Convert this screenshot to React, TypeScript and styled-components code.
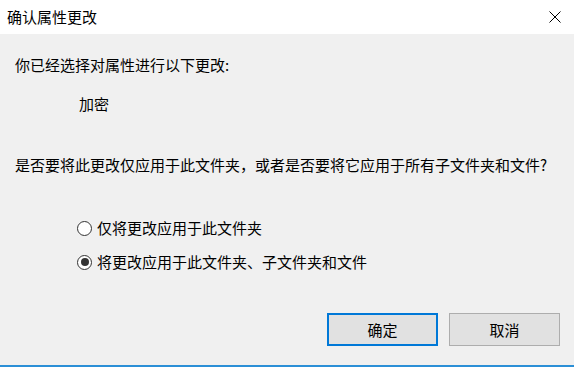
import React from "react";
import styled, { createGlobalStyle } from "styled-components";

const Global = createGlobalStyle`
  html, body { margin: 0; padding: 0; background: #f0f0f0; }
  body { font-family: "Noto Sans CJK SC", "Microsoft YaHei", sans-serif; }
  * { box-sizing: border-box; }
`;

const Window = styled.div`
  width: 574px;
  height: 367px;
  display: flex;
  flex-direction: column;
  background: #f0f0f0;
  color: #000;
  font-size: 15px;
  border-bottom: 2px solid #2b8fd6;
`;

const TitleBar = styled.div`
  height: 34px;
  flex: none;
  background: #fff;
  display: flex;
  align-items: center;
  justify-content: space-between;
  padding: 0 13px 0 7px;
`;

const Title = styled.span`
  line-height: 20px;
`;

const CloseIcon = styled.svg`
  width: 12px;
  height: 12px;
  display: block;
`;

const Body = styled.div`
  flex: 1;
  display: flex;
  flex-direction: column;
  padding: 0 14px 0 15px;
`;

const Line = styled.div<{ $top: number; $indent?: number }>`
  line-height: 20px;
  height: 20px;
  margin-top: ${(p) => p.$top}px;
  padding-left: ${(p) => p.$indent ?? 0}px;
  white-space: nowrap;
`;

const RadioGroup = styled.div`
  margin-top: 43px;
  padding-left: 62px;
  display: flex;
  flex-direction: column;
  gap: 14px;
`;

const RadioRow = styled.label`
  display: flex;
  align-items: center;
  gap: 5px;
  height: 20px;
  line-height: 20px;
`;

const RadioCircle = styled.span<{ $checked?: boolean }>`
  width: 15px;
  height: 15px;
  border-radius: 50%;
  border: 1px solid #333;
  background: #fff;
  display: flex;
  align-items: center;
  justify-content: center;
  flex: none;
  &::after {
    content: "";
    width: 8px;
    height: 8px;
    border-radius: 50%;
    background: ${(p) => (p.$checked ? "#333" : "transparent")};
  }
`;

const ButtonRow = styled.div`
  margin-top: 41px;
  display: flex;
  justify-content: flex-end;
  gap: 11px;
`;

const Button = styled.button<{ $primary?: boolean }>`
  width: 111px;
  height: 33px;
  background: #e1e1e1;
  border: ${(p) => (p.$primary ? "2px solid #0078d7" : "1px solid #adadad")};
  font-family: inherit;
  font-size: 15px;
  color: #000;
  padding: 0;
  margin: 0;
  display: flex;
  align-items: center;
  justify-content: center;
`;

export default function App() {
  return (
    <>
      <Global />
      <Window>
        <TitleBar>
          <Title>确认属性更改</Title>
          <CloseIcon viewBox="0 0 12 12">
            <path d="M0.5 0.5 L11.5 11.5 M11.5 0.5 L0.5 11.5" stroke="#000" strokeWidth="1" fill="none" />
          </CloseIcon>
        </TitleBar>
        <Body>
          <Line $top={21}>你已经选择对属性进行以下更改:</Line>
          <Line $top={19} $indent={64}>加密</Line>
          <Line $top={41}>是否要将此更改仅应用于此文件夹，或者是否要将它应用于所有子文件夹和文件?</Line>
          <RadioGroup>
            <RadioRow>
              <RadioCircle />
              仅将更改应用于此文件夹
            </RadioRow>
            <RadioRow>
              <RadioCircle $checked />
              将更改应用于此文件夹、子文件夹和文件
            </RadioRow>
          </RadioGroup>
          <ButtonRow>
            <Button $primary>确定</Button>
            <Button>取消</Button>
          </ButtonRow>
        </Body>
      </Window>
    </>
  );
}
